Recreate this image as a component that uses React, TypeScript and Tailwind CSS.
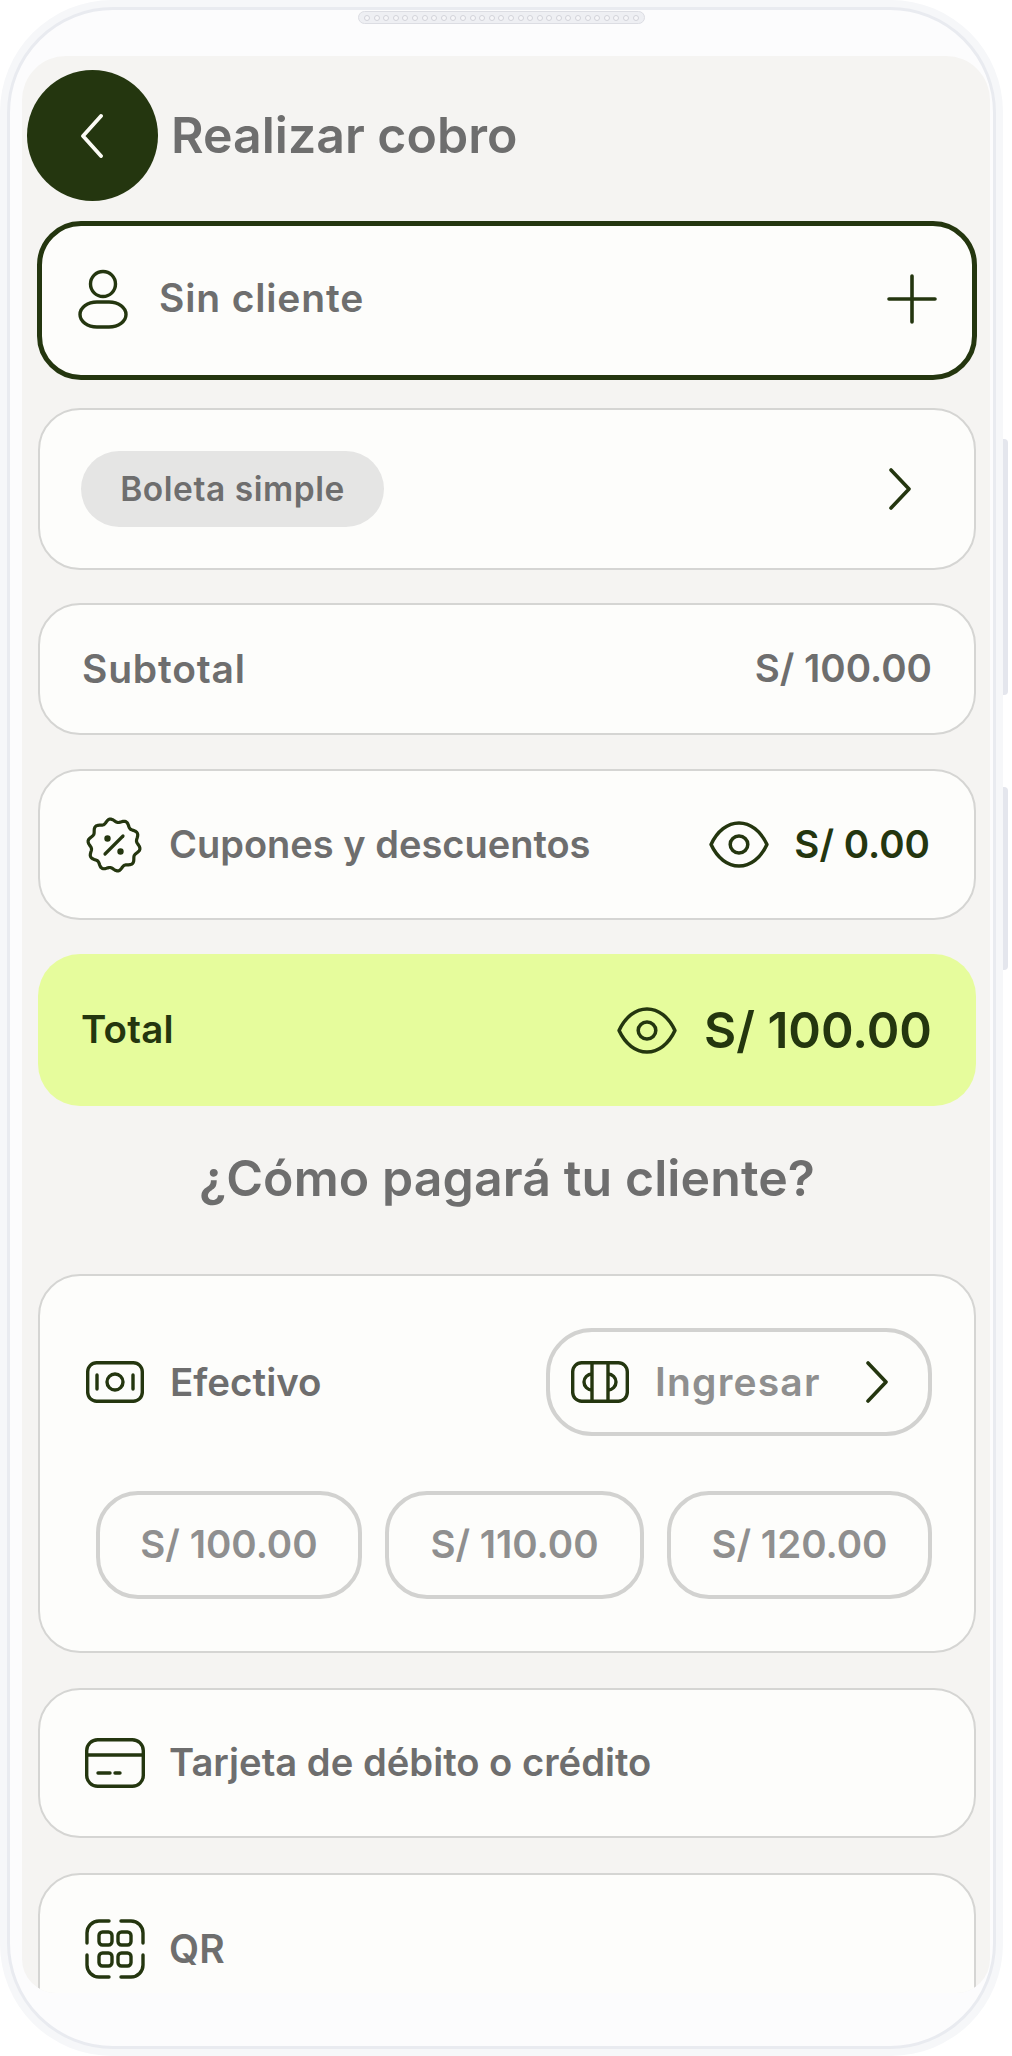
import type { ReactNode } from "react";

const GREEN = "#24360f";

// scalloped outline of the coupon badge
const scallop = Array.from({ length: 120 }, (_, i) => {
  const a = (i / 120) * Math.PI * 2;
  const r = 24.5 + 1.7 * Math.cos(a * 10 - Math.PI / 2);
  return `${i === 0 ? "M" : "L"}${(28 + r * Math.cos(a)).toFixed(2)} ${(28 + r * Math.sin(a)).toFixed(2)}`;
}).join("") + "Z";

function Eye({ className }: { className?: string }) {
  return (
    <svg viewBox="0 0 58 47" fill="none" stroke={GREEN} strokeWidth="3.4" preserveAspectRatio="none" className={className}>
      <path d="M2 23.5C8 10 18 2 29 2s21 8 27 21.5C50 37 40 45 29 45S8 37 2 23.5Z" strokeLinejoin="round" />
      <circle cx="29" cy="23.5" r="8.5" />
    </svg>
  );
}

function Chevron({ className }: { className?: string }) {
  return (
    <svg viewBox="0 0 22 42" fill="none" stroke={GREEN} strokeWidth="3.6" strokeLinecap="round" strokeLinejoin="round" className={className}>
      <path d="M2 2l18 19L2 40" />
    </svg>
  );
}

function Card({ className = "", children }: { className?: string; children: ReactNode }) {
  return (
    <div className={`flex items-center justify-between rounded-[42px] border-2 border-[#d5d5d3] bg-[#fdfdfb] ${className}`}>
      {children}
    </div>
  );
}

function AmountPill({ value, className }: { value: string; className: string }) {
  return (
    <div className={`flex h-[108px] items-center justify-center rounded-[42px] border-[4px] border-[#d2d2d0] text-[38.5px] font-semibold text-[#8f8f8f] ${className}`}>
      {value}
    </div>
  );
}

export default function App() {
  return (
    <div className="relative h-[2056px] w-[1012px] overflow-hidden bg-white font-['Inter',sans-serif]">
      {/* side buttons */}
      <div className="absolute right-[4px] top-[439px] h-[256px] w-[5px] rounded-r bg-[#e4e6ed]" />
      <div className="absolute right-[4px] top-[787px] h-[183px] w-[5px] rounded-r bg-[#e4e6ed]" />

      {/* phone frame */}
      <div className="h-[2056px] w-[1003px] rounded-[112px] bg-[#f6f7f9] p-[7px]">
        <div className="flex h-full flex-col rounded-[106px] border-[3px] border-[#e9ebf0] bg-[#fcfcfd] px-[12px]">
          <div className="flex h-[46px] shrink-0 justify-center pt-[1px]">
            <div className="flex h-[13px] w-[287px] items-center justify-between rounded-full border border-[#dcdde3] bg-[#eeeff3] px-[5px]">
              {Array.from({ length: 29 }).map((_, i) => (
                <span key={i} className="h-[6px] w-[6px] rounded-full border border-[#d2d3da] bg-[#f6f6f9]" />
              ))}
            </div>
          </div>

          {/* screen */}
          <div className="h-[1937px] w-[968px] overflow-hidden rounded-b-[34px] rounded-t-[44px] bg-[#f5f4f2] pl-[16px] pr-[14px] pt-[14px]">
            <div className="-ml-[11px] flex items-center gap-[13px]">
              <div className="flex h-[131px] w-[131px] items-center justify-center rounded-full bg-[#24360f]">
                <svg viewBox="0 0 22 44" fill="none" stroke="#fbfbf5" strokeWidth="3.8" strokeLinecap="round" strokeLinejoin="round" className="mr-[2px] h-[44px] w-[22px]">
                  <path d="M20 2L2 22l18 20" />
                </svg>
              </div>
              <h1 className="pb-[2px] text-[50px] font-semibold leading-none text-[#6e6e6e]">Realizar cobro</h1>
            </div>

            <div className="-mx-px mt-[20px] flex h-[159px] items-center justify-between rounded-[44px] border-[5px] border-[#24360f] bg-[#fdfdfb] pb-[4px] pl-[36px] pr-[35px]">
              <div className="flex items-center gap-[31px]">
                <svg viewBox="0 0 50 60" fill="none" stroke={GREEN} strokeWidth="3.4" className="h-[60px] w-[50px]">
                  <circle cx="25" cy="15" r="12.5" />
                  <rect x="2" y="33" width="46" height="25" rx="17" ry="12.5" />
                </svg>
                <span className="text-[39px] font-semibold tracking-[0.85px] text-[#6e6e6e]">Sin cliente</span>
              </div>
              <svg viewBox="0 0 50 50" fill="none" stroke={GREEN} strokeWidth="3.6" strokeLinecap="round" className="h-[50px] w-[50px]">
                <path d="M25 2v46M2 25h46" />
              </svg>
            </div>

            <Card className="mt-[28px] h-[162px] pl-[41px] pr-[63px]">
              <div className="flex h-[76px] w-[303px] items-center justify-center rounded-full bg-[#e5e5e4] text-[33.5px] font-semibold tracking-[0.55px] text-[#6e6e6e]">
                Boleta simple
              </div>
              <Chevron className="h-[42px] w-[22px]" />
            </Card>

            <Card className="mt-[33px] h-[132px] pl-[42px] pr-[42px] font-semibold text-[#6e6e6e]">
              <span className="text-[39px] tracking-[0.8px]">Subtotal</span>
              <span className="text-[38.5px]">S/ 100.00</span>
            </Card>

            <Card className="mt-[34px] h-[151px] pl-[46px] pr-[44px]">
              <div className="flex items-center gap-[27px]">
                <svg viewBox="0 0 56 56" fill="none" stroke={GREEN} strokeWidth="3.2" strokeLinecap="round" className="h-[56px] w-[56px]">
                  <path d={scallop} strokeLinejoin="round" />
                  <path d="M19 37l18-18" />
                  <circle cx="21.5" cy="21.5" r="1.6" fill={GREEN} />
                  <circle cx="34.5" cy="34.5" r="1.6" fill={GREEN} />
                </svg>
                <span className="text-[38px] font-semibold text-[#6e6e6e]">Cupones y descuentos</span>
              </div>
              <div className="flex items-center gap-[25px]">
                <Eye className="h-[47px] w-[60px]" />
                <span className="text-[38.5px] font-semibold text-[#24360f]">S/ 0.00</span>
              </div>
            </Card>

            <div className="mt-[34px] flex h-[152px] items-center justify-between rounded-[42px] bg-[#e6fc9c] pl-[43px] pr-[44px]">
              <span className="text-[38.5px] font-semibold tracking-[0.2px] text-[#24360f]">Total</span>
              <div className="flex items-center gap-[27px]">
                <Eye className="h-[47px] w-[60px]" />
                <span className="text-[49.5px] font-semibold text-[#24360f]">S/ 100.00</span>
              </div>
            </div>

            <h2 className="h-[168px] pt-[42px] text-center text-[50px] font-semibold leading-[60px] tracking-[0.1px] text-[#6e6e6e]">
              ¿Cómo pagará tu cliente?
            </h2>

            <div className="h-[379px] rounded-[42px] border-2 border-[#d5d5d3] bg-[#fdfdfb] pl-[46px] pr-[42px] pt-[52px]">
              <div className="flex items-center justify-between">
                <div className="flex items-center gap-[26px]">
                  <svg viewBox="0 0 58 42" fill="none" stroke={GREEN} strokeWidth="3.4" strokeLinecap="round" className="h-[42px] w-[58px]">
                    <rect x="1.7" y="1.7" width="54.6" height="38.6" rx="9" />
                    <circle cx="29" cy="21" r="8" />
                    <path d="M11 14v14M47 14v14" />
                  </svg>
                  <span className="pt-[1px] text-[38.5px] font-semibold text-[#6e6e6e]">Efectivo</span>
                </div>
                <div className="flex h-[108px] w-[386px] items-center rounded-[46px] border-[4px] border-[#d2d2d0] pl-[21px]">
                  <svg viewBox="0 0 58 42" fill="none" stroke={GREEN} strokeWidth="3.4" className="h-[42px] w-[58px]">
                    <rect x="1.7" y="1.7" width="54.6" height="38.6" rx="9" />
                    <path d="M21 2v38M37 2v38" />
                    <path d="M21 13a8 8 0 0 0 0 16M37 13a8 8 0 0 1 0 16" />
                  </svg>
                  <span className="ml-[26px] text-[39px] font-semibold tracking-[1.2px] text-[#8f8f8f]">Ingresar</span>
                  <Chevron className="ml-auto mr-[40px] h-[42px] w-[22px]" />
                </div>
              </div>
              <div className="mt-[55px] flex gap-[23px] pl-[10px]">
                <AmountPill value="S/ 100.00" className="w-[266px]" />
                <AmountPill value="S/ 110.00" className="w-[259px]" />
                <AmountPill value="S/ 120.00" className="w-[265px]" />
              </div>
            </div>

            <Card className="mt-[35px] h-[150px] justify-start gap-[24px] pl-[45px]">
              <svg viewBox="0 0 60 50" fill="none" stroke={GREEN} strokeWidth="3.4" strokeLinecap="round" className="h-[50px] w-[60px]">
                <rect x="1.7" y="1.7" width="56.6" height="46.6" rx="11" />
                <path d="M2 17h56M13 35h12M30 35h5" />
              </svg>
              <span className="text-[38.2px] font-semibold text-[#6e6e6e]">Tarjeta de débito o crédito</span>
            </Card>

            <div className="mt-[35px] flex h-[240px] items-start gap-[24px] rounded-t-[42px] border-2 border-[#d5d5d3] bg-[#fdfdfb] pl-[45px] pt-[44px]">
              <svg viewBox="0 0 60 60" fill="none" stroke={GREEN} strokeWidth="3.4" strokeLinecap="round" className="h-[60px] w-[60px]">
                <path d="M2 24V14A12 12 0 0 1 14 2h10M36 2h10a12 12 0 0 1 12 12v10M58 36v10a12 12 0 0 1-12 12H36M24 58H14A12 12 0 0 1 2 46V36" />
                <rect x="14" y="13" width="13" height="13" rx="3.5" />
                <rect x="33" y="13" width="13" height="13" rx="3.5" />
                <rect x="14" y="34" width="13" height="13" rx="3.5" />
                <rect x="33" y="34" width="13" height="13" rx="3.5" />
              </svg>
              <span className="text-[39px] font-semibold leading-[60px] text-[#6e6e6e]">QR</span>
            </div>
          </div>
        </div>
      </div>
    </div>
  );
}
